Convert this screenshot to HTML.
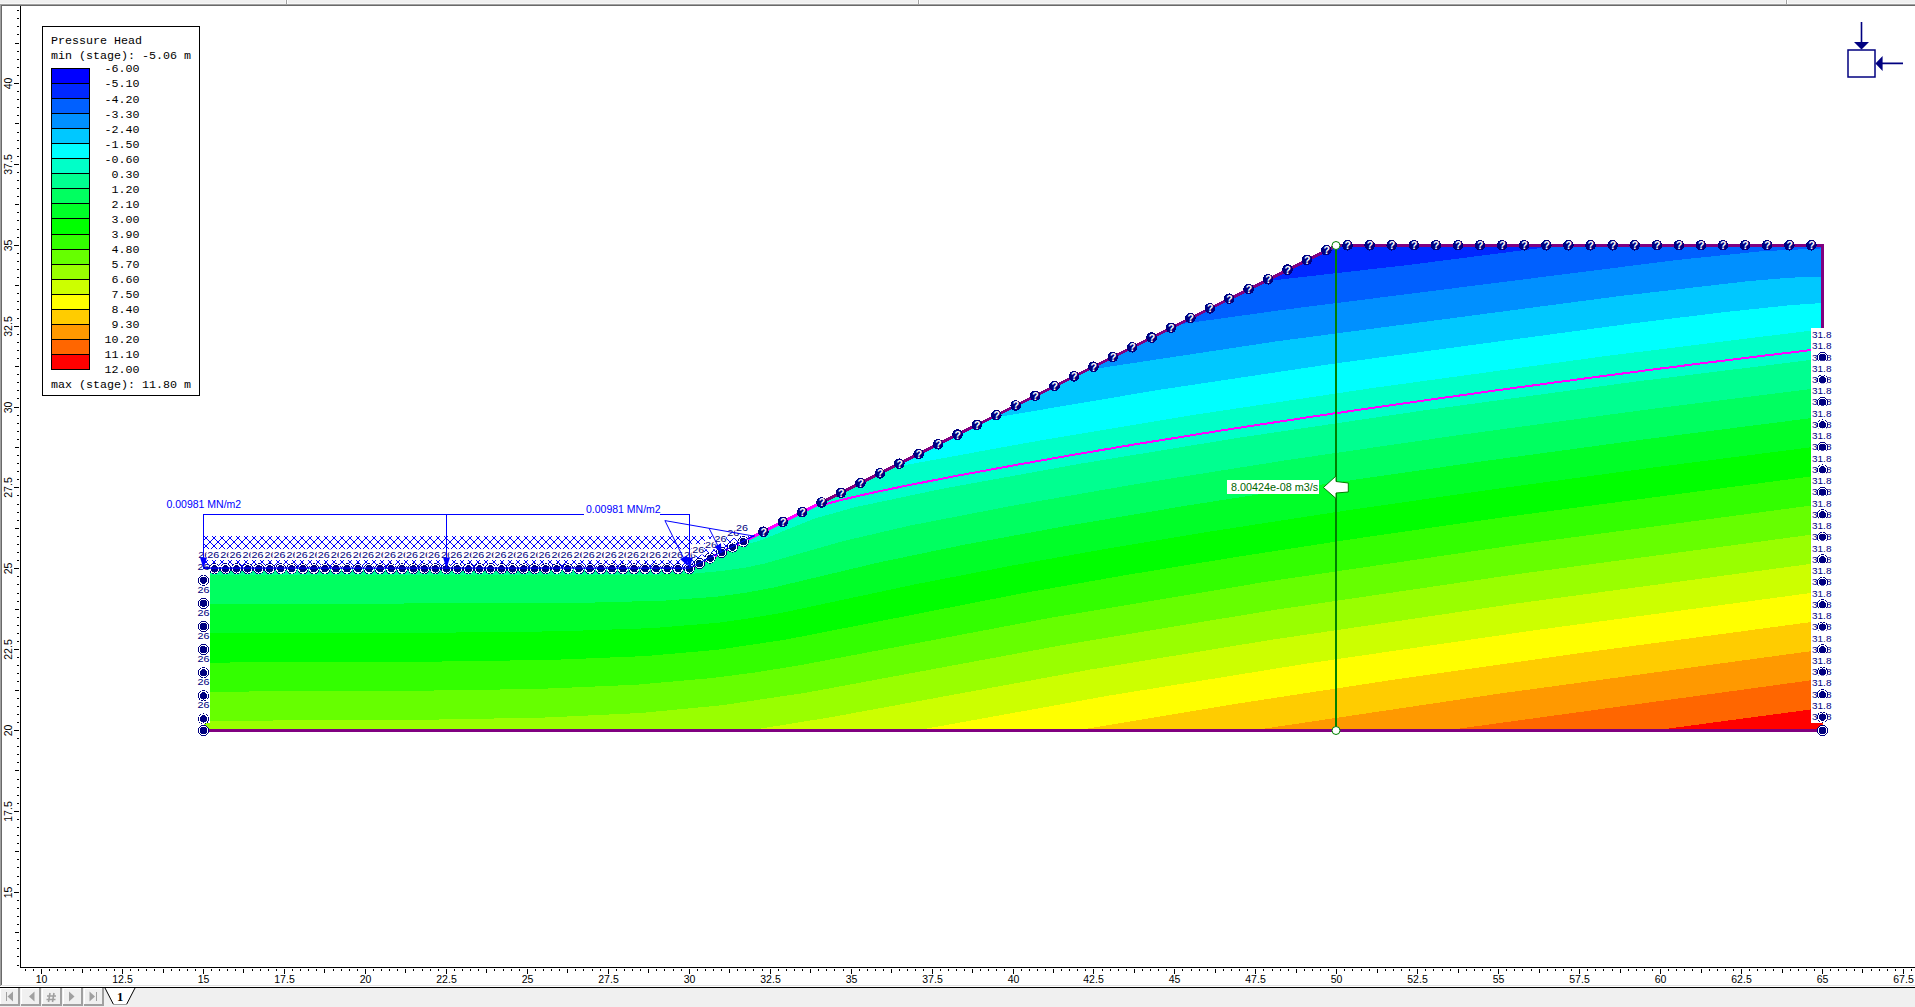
<!DOCTYPE html>
<html><head><meta charset="utf-8"><style>
html,body{margin:0;padding:0;background:#fff;width:1915px;height:1007px;overflow:hidden}
svg text{font-kerning:none}
</style></head><body>
<svg width="1915" height="1007" viewBox="0 0 1915 1007" style="position:absolute;left:0;top:0">
<rect x="0" y="0" width="1915" height="3" fill="#f0f0f0"/>
<rect x="0" y="3" width="1915" height="1" fill="#f7f7f7"/>
<rect x="0" y="4" width="1915" height="1" fill="#a0a0a0"/>
<rect x="0" y="5" width="1915" height="1" fill="#696969"/>
<rect x="285" y="0" width="1" height="4" fill="#f7f7f7"/>
<rect x="286" y="0" width="1" height="4" fill="#a0a0a0"/>
<rect x="287" y="0" width="1" height="4" fill="#ffffff"/>
<rect x="917" y="0" width="1" height="4" fill="#f7f7f7"/>
<rect x="918" y="0" width="1" height="4" fill="#a0a0a0"/>
<rect x="919" y="0" width="1" height="4" fill="#ffffff"/>
<rect x="1785" y="0" width="1" height="4" fill="#f7f7f7"/>
<rect x="1786" y="0" width="1" height="4" fill="#a0a0a0"/>
<rect x="1787" y="0" width="1" height="4" fill="#ffffff"/>
<rect x="0" y="4" width="1" height="982" fill="#a0a0a0"/>
<rect x="1" y="5" width="1" height="980" fill="#696969"/>
<rect x="1" y="985" width="1914" height="1" fill="#e3e3e3"/>
<rect x="0" y="987" width="1915" height="1" fill="#000000"/>
<rect x="0" y="988" width="1915" height="19" fill="#f0f0f0"/>
<rect x="0" y="988" width="20" height="18" fill="#ffffff"/>
<rect x="1" y="989" width="17" height="15" fill="#f0f0f0"/>
<rect x="18" y="988" width="2" height="18" fill="#a0a0a0"/>
<rect x="0" y="1004" width="20" height="2" fill="#a0a0a0"/>
<rect x="21" y="988" width="20" height="18" fill="#ffffff"/>
<rect x="22" y="989" width="17" height="15" fill="#f0f0f0"/>
<rect x="39" y="988" width="2" height="18" fill="#a0a0a0"/>
<rect x="21" y="1004" width="20" height="2" fill="#a0a0a0"/>
<rect x="42" y="988" width="20" height="18" fill="#ffffff"/>
<rect x="43" y="989" width="17" height="15" fill="#f0f0f0"/>
<rect x="60" y="988" width="2" height="18" fill="#a0a0a0"/>
<rect x="42" y="1004" width="20" height="2" fill="#a0a0a0"/>
<rect x="63" y="988" width="20" height="18" fill="#ffffff"/>
<rect x="64" y="989" width="17" height="15" fill="#f0f0f0"/>
<rect x="81" y="988" width="2" height="18" fill="#a0a0a0"/>
<rect x="63" y="1004" width="20" height="2" fill="#a0a0a0"/>
<rect x="84" y="988" width="20" height="18" fill="#ffffff"/>
<rect x="85" y="989" width="17" height="15" fill="#f0f0f0"/>
<rect x="102" y="988" width="2" height="18" fill="#a0a0a0"/>
<rect x="84" y="1004" width="20" height="2" fill="#a0a0a0"/>
<rect x="6" y="992" width="1" height="9" fill="#a0a0a0"/><path d="M13,991.5 L7.5,996.5 L13,1001.5Z" fill="#a0a0a0"/>
<path d="M34.5,991.5 L29,996.5 L34.5,1001.5Z" fill="#a0a0a0"/>
<path d="M50,993 L48.5,1002 M54,993 L52.5,1002 M47,996 L56,996 M46.5,999.5 L55.5,999.5" stroke="#a0a0a0" stroke-width="1.6" fill="none"/>
<path d="M69,991.5 L74.5,996.5 L69,1001.5Z" fill="#a0a0a0"/>
<path d="M89.5,991.5 L95,996.5 L89.5,1001.5Z" fill="#a0a0a0"/><rect x="96" y="992" width="1" height="9" fill="#a0a0a0"/>
<path d="M105,988 L113.5,1004.5 L126.5,1004.5 L135,988Z" fill="#ffffff"/>
<path d="M105,988 L113.5,1004.5 M135,988 L126.5,1004.5" stroke="#000" stroke-width="1" fill="none"/>
<rect x="113" y="1004" width="14" height="1" fill="#a0a0a0"/>
<text x="120" y="1000.5" font-family="Liberation Serif" font-size="12.5" font-weight="bold" fill="#000" text-anchor="middle">1</text>
<rect x="20" y="6" width="1" height="962" fill="#000"/>
<rect x="20" y="967" width="1895" height="1" fill="#000"/>
<rect x="25" y="969" width="1" height="2" fill="#000"/>
<rect x="33" y="969" width="1" height="2" fill="#000"/>
<text x="41.5" y="982.5" font-family="Liberation Sans" font-size="10.5" fill="#000" text-anchor="middle">10</text>
<rect x="41" y="969" width="1" height="5" fill="#000"/>
<rect x="49" y="969" width="1" height="2" fill="#000"/>
<rect x="57" y="969" width="1" height="2" fill="#000"/>
<rect x="65" y="969" width="1" height="2" fill="#000"/>
<rect x="73" y="969" width="1" height="2" fill="#000"/>
<rect x="82" y="969" width="1" height="4" fill="#000"/>
<rect x="90" y="969" width="1" height="2" fill="#000"/>
<rect x="98" y="969" width="1" height="2" fill="#000"/>
<rect x="106" y="969" width="1" height="2" fill="#000"/>
<rect x="114" y="969" width="1" height="2" fill="#000"/>
<text x="122.5" y="982.5" font-family="Liberation Sans" font-size="10.5" fill="#000" text-anchor="middle">12.5</text>
<rect x="122" y="969" width="1" height="5" fill="#000"/>
<rect x="130" y="969" width="1" height="2" fill="#000"/>
<rect x="138" y="969" width="1" height="2" fill="#000"/>
<rect x="146" y="969" width="1" height="2" fill="#000"/>
<rect x="154" y="969" width="1" height="2" fill="#000"/>
<rect x="163" y="969" width="1" height="4" fill="#000"/>
<rect x="171" y="969" width="1" height="2" fill="#000"/>
<rect x="179" y="969" width="1" height="2" fill="#000"/>
<rect x="187" y="969" width="1" height="2" fill="#000"/>
<rect x="195" y="969" width="1" height="2" fill="#000"/>
<text x="203.5" y="982.5" font-family="Liberation Sans" font-size="10.5" fill="#000" text-anchor="middle">15</text>
<rect x="203" y="969" width="1" height="5" fill="#000"/>
<rect x="211" y="969" width="1" height="2" fill="#000"/>
<rect x="219" y="969" width="1" height="2" fill="#000"/>
<rect x="227" y="969" width="1" height="2" fill="#000"/>
<rect x="235" y="969" width="1" height="2" fill="#000"/>
<rect x="243" y="969" width="1" height="4" fill="#000"/>
<rect x="252" y="969" width="1" height="2" fill="#000"/>
<rect x="260" y="969" width="1" height="2" fill="#000"/>
<rect x="268" y="969" width="1" height="2" fill="#000"/>
<rect x="276" y="969" width="1" height="2" fill="#000"/>
<text x="284.5" y="982.5" font-family="Liberation Sans" font-size="10.5" fill="#000" text-anchor="middle">17.5</text>
<rect x="284" y="969" width="1" height="5" fill="#000"/>
<rect x="292" y="969" width="1" height="2" fill="#000"/>
<rect x="300" y="969" width="1" height="2" fill="#000"/>
<rect x="308" y="969" width="1" height="2" fill="#000"/>
<rect x="316" y="969" width="1" height="2" fill="#000"/>
<rect x="324" y="969" width="1" height="4" fill="#000"/>
<rect x="333" y="969" width="1" height="2" fill="#000"/>
<rect x="341" y="969" width="1" height="2" fill="#000"/>
<rect x="349" y="969" width="1" height="2" fill="#000"/>
<rect x="357" y="969" width="1" height="2" fill="#000"/>
<text x="365.5" y="982.5" font-family="Liberation Sans" font-size="10.5" fill="#000" text-anchor="middle">20</text>
<rect x="365" y="969" width="1" height="5" fill="#000"/>
<rect x="373" y="969" width="1" height="2" fill="#000"/>
<rect x="381" y="969" width="1" height="2" fill="#000"/>
<rect x="389" y="969" width="1" height="2" fill="#000"/>
<rect x="397" y="969" width="1" height="2" fill="#000"/>
<rect x="405" y="969" width="1" height="4" fill="#000"/>
<rect x="413" y="969" width="1" height="2" fill="#000"/>
<rect x="422" y="969" width="1" height="2" fill="#000"/>
<rect x="430" y="969" width="1" height="2" fill="#000"/>
<rect x="438" y="969" width="1" height="2" fill="#000"/>
<text x="446.5" y="982.5" font-family="Liberation Sans" font-size="10.5" fill="#000" text-anchor="middle">22.5</text>
<rect x="446" y="969" width="1" height="5" fill="#000"/>
<rect x="454" y="969" width="1" height="2" fill="#000"/>
<rect x="462" y="969" width="1" height="2" fill="#000"/>
<rect x="470" y="969" width="1" height="2" fill="#000"/>
<rect x="478" y="969" width="1" height="2" fill="#000"/>
<rect x="486" y="969" width="1" height="4" fill="#000"/>
<rect x="494" y="969" width="1" height="2" fill="#000"/>
<rect x="503" y="969" width="1" height="2" fill="#000"/>
<rect x="511" y="969" width="1" height="2" fill="#000"/>
<rect x="519" y="969" width="1" height="2" fill="#000"/>
<text x="527.5" y="982.5" font-family="Liberation Sans" font-size="10.5" fill="#000" text-anchor="middle">25</text>
<rect x="527" y="969" width="1" height="5" fill="#000"/>
<rect x="535" y="969" width="1" height="2" fill="#000"/>
<rect x="543" y="969" width="1" height="2" fill="#000"/>
<rect x="551" y="969" width="1" height="2" fill="#000"/>
<rect x="559" y="969" width="1" height="2" fill="#000"/>
<rect x="567" y="969" width="1" height="4" fill="#000"/>
<rect x="575" y="969" width="1" height="2" fill="#000"/>
<rect x="583" y="969" width="1" height="2" fill="#000"/>
<rect x="592" y="969" width="1" height="2" fill="#000"/>
<rect x="600" y="969" width="1" height="2" fill="#000"/>
<text x="608.5" y="982.5" font-family="Liberation Sans" font-size="10.5" fill="#000" text-anchor="middle">27.5</text>
<rect x="608" y="969" width="1" height="5" fill="#000"/>
<rect x="616" y="969" width="1" height="2" fill="#000"/>
<rect x="624" y="969" width="1" height="2" fill="#000"/>
<rect x="632" y="969" width="1" height="2" fill="#000"/>
<rect x="640" y="969" width="1" height="2" fill="#000"/>
<rect x="648" y="969" width="1" height="4" fill="#000"/>
<rect x="656" y="969" width="1" height="2" fill="#000"/>
<rect x="664" y="969" width="1" height="2" fill="#000"/>
<rect x="673" y="969" width="1" height="2" fill="#000"/>
<rect x="681" y="969" width="1" height="2" fill="#000"/>
<text x="689.5" y="982.5" font-family="Liberation Sans" font-size="10.5" fill="#000" text-anchor="middle">30</text>
<rect x="689" y="969" width="1" height="5" fill="#000"/>
<rect x="697" y="969" width="1" height="2" fill="#000"/>
<rect x="705" y="969" width="1" height="2" fill="#000"/>
<rect x="713" y="969" width="1" height="2" fill="#000"/>
<rect x="721" y="969" width="1" height="2" fill="#000"/>
<rect x="729" y="969" width="1" height="4" fill="#000"/>
<rect x="737" y="969" width="1" height="2" fill="#000"/>
<rect x="745" y="969" width="1" height="2" fill="#000"/>
<rect x="753" y="969" width="1" height="2" fill="#000"/>
<rect x="762" y="969" width="1" height="2" fill="#000"/>
<text x="770.5" y="982.5" font-family="Liberation Sans" font-size="10.5" fill="#000" text-anchor="middle">32.5</text>
<rect x="770" y="969" width="1" height="5" fill="#000"/>
<rect x="778" y="969" width="1" height="2" fill="#000"/>
<rect x="786" y="969" width="1" height="2" fill="#000"/>
<rect x="794" y="969" width="1" height="2" fill="#000"/>
<rect x="802" y="969" width="1" height="2" fill="#000"/>
<rect x="810" y="969" width="1" height="4" fill="#000"/>
<rect x="818" y="969" width="1" height="2" fill="#000"/>
<rect x="826" y="969" width="1" height="2" fill="#000"/>
<rect x="834" y="969" width="1" height="2" fill="#000"/>
<rect x="843" y="969" width="1" height="2" fill="#000"/>
<text x="851.5" y="982.5" font-family="Liberation Sans" font-size="10.5" fill="#000" text-anchor="middle">35</text>
<rect x="851" y="969" width="1" height="5" fill="#000"/>
<rect x="859" y="969" width="1" height="2" fill="#000"/>
<rect x="867" y="969" width="1" height="2" fill="#000"/>
<rect x="875" y="969" width="1" height="2" fill="#000"/>
<rect x="883" y="969" width="1" height="2" fill="#000"/>
<rect x="891" y="969" width="1" height="4" fill="#000"/>
<rect x="899" y="969" width="1" height="2" fill="#000"/>
<rect x="907" y="969" width="1" height="2" fill="#000"/>
<rect x="915" y="969" width="1" height="2" fill="#000"/>
<rect x="923" y="969" width="1" height="2" fill="#000"/>
<text x="932.5" y="982.5" font-family="Liberation Sans" font-size="10.5" fill="#000" text-anchor="middle">37.5</text>
<rect x="932" y="969" width="1" height="5" fill="#000"/>
<rect x="940" y="969" width="1" height="2" fill="#000"/>
<rect x="948" y="969" width="1" height="2" fill="#000"/>
<rect x="956" y="969" width="1" height="2" fill="#000"/>
<rect x="964" y="969" width="1" height="2" fill="#000"/>
<rect x="972" y="969" width="1" height="4" fill="#000"/>
<rect x="980" y="969" width="1" height="2" fill="#000"/>
<rect x="988" y="969" width="1" height="2" fill="#000"/>
<rect x="996" y="969" width="1" height="2" fill="#000"/>
<rect x="1004" y="969" width="1" height="2" fill="#000"/>
<text x="1013.5" y="982.5" font-family="Liberation Sans" font-size="10.5" fill="#000" text-anchor="middle">40</text>
<rect x="1013" y="969" width="1" height="5" fill="#000"/>
<rect x="1021" y="969" width="1" height="2" fill="#000"/>
<rect x="1029" y="969" width="1" height="2" fill="#000"/>
<rect x="1037" y="969" width="1" height="2" fill="#000"/>
<rect x="1045" y="969" width="1" height="2" fill="#000"/>
<rect x="1053" y="969" width="1" height="4" fill="#000"/>
<rect x="1061" y="969" width="1" height="2" fill="#000"/>
<rect x="1069" y="969" width="1" height="2" fill="#000"/>
<rect x="1077" y="969" width="1" height="2" fill="#000"/>
<rect x="1085" y="969" width="1" height="2" fill="#000"/>
<text x="1093.5" y="982.5" font-family="Liberation Sans" font-size="10.5" fill="#000" text-anchor="middle">42.5</text>
<rect x="1093" y="969" width="1" height="5" fill="#000"/>
<rect x="1102" y="969" width="1" height="2" fill="#000"/>
<rect x="1110" y="969" width="1" height="2" fill="#000"/>
<rect x="1118" y="969" width="1" height="2" fill="#000"/>
<rect x="1126" y="969" width="1" height="2" fill="#000"/>
<rect x="1134" y="969" width="1" height="4" fill="#000"/>
<rect x="1142" y="969" width="1" height="2" fill="#000"/>
<rect x="1150" y="969" width="1" height="2" fill="#000"/>
<rect x="1158" y="969" width="1" height="2" fill="#000"/>
<rect x="1166" y="969" width="1" height="2" fill="#000"/>
<text x="1174.5" y="982.5" font-family="Liberation Sans" font-size="10.5" fill="#000" text-anchor="middle">45</text>
<rect x="1174" y="969" width="1" height="5" fill="#000"/>
<rect x="1182" y="969" width="1" height="2" fill="#000"/>
<rect x="1191" y="969" width="1" height="2" fill="#000"/>
<rect x="1199" y="969" width="1" height="2" fill="#000"/>
<rect x="1207" y="969" width="1" height="2" fill="#000"/>
<rect x="1215" y="969" width="1" height="4" fill="#000"/>
<rect x="1223" y="969" width="1" height="2" fill="#000"/>
<rect x="1231" y="969" width="1" height="2" fill="#000"/>
<rect x="1239" y="969" width="1" height="2" fill="#000"/>
<rect x="1247" y="969" width="1" height="2" fill="#000"/>
<text x="1255.5" y="982.5" font-family="Liberation Sans" font-size="10.5" fill="#000" text-anchor="middle">47.5</text>
<rect x="1255" y="969" width="1" height="5" fill="#000"/>
<rect x="1263" y="969" width="1" height="2" fill="#000"/>
<rect x="1272" y="969" width="1" height="2" fill="#000"/>
<rect x="1280" y="969" width="1" height="2" fill="#000"/>
<rect x="1288" y="969" width="1" height="2" fill="#000"/>
<rect x="1296" y="969" width="1" height="4" fill="#000"/>
<rect x="1304" y="969" width="1" height="2" fill="#000"/>
<rect x="1312" y="969" width="1" height="2" fill="#000"/>
<rect x="1320" y="969" width="1" height="2" fill="#000"/>
<rect x="1328" y="969" width="1" height="2" fill="#000"/>
<text x="1336.5" y="982.5" font-family="Liberation Sans" font-size="10.5" fill="#000" text-anchor="middle">50</text>
<rect x="1336" y="969" width="1" height="5" fill="#000"/>
<rect x="1344" y="969" width="1" height="2" fill="#000"/>
<rect x="1352" y="969" width="1" height="2" fill="#000"/>
<rect x="1361" y="969" width="1" height="2" fill="#000"/>
<rect x="1369" y="969" width="1" height="2" fill="#000"/>
<rect x="1377" y="969" width="1" height="4" fill="#000"/>
<rect x="1385" y="969" width="1" height="2" fill="#000"/>
<rect x="1393" y="969" width="1" height="2" fill="#000"/>
<rect x="1401" y="969" width="1" height="2" fill="#000"/>
<rect x="1409" y="969" width="1" height="2" fill="#000"/>
<text x="1417.5" y="982.5" font-family="Liberation Sans" font-size="10.5" fill="#000" text-anchor="middle">52.5</text>
<rect x="1417" y="969" width="1" height="5" fill="#000"/>
<rect x="1425" y="969" width="1" height="2" fill="#000"/>
<rect x="1433" y="969" width="1" height="2" fill="#000"/>
<rect x="1442" y="969" width="1" height="2" fill="#000"/>
<rect x="1450" y="969" width="1" height="2" fill="#000"/>
<rect x="1458" y="969" width="1" height="4" fill="#000"/>
<rect x="1466" y="969" width="1" height="2" fill="#000"/>
<rect x="1474" y="969" width="1" height="2" fill="#000"/>
<rect x="1482" y="969" width="1" height="2" fill="#000"/>
<rect x="1490" y="969" width="1" height="2" fill="#000"/>
<text x="1498.5" y="982.5" font-family="Liberation Sans" font-size="10.5" fill="#000" text-anchor="middle">55</text>
<rect x="1498" y="969" width="1" height="5" fill="#000"/>
<rect x="1506" y="969" width="1" height="2" fill="#000"/>
<rect x="1514" y="969" width="1" height="2" fill="#000"/>
<rect x="1522" y="969" width="1" height="2" fill="#000"/>
<rect x="1531" y="969" width="1" height="2" fill="#000"/>
<rect x="1539" y="969" width="1" height="4" fill="#000"/>
<rect x="1547" y="969" width="1" height="2" fill="#000"/>
<rect x="1555" y="969" width="1" height="2" fill="#000"/>
<rect x="1563" y="969" width="1" height="2" fill="#000"/>
<rect x="1571" y="969" width="1" height="2" fill="#000"/>
<text x="1579.5" y="982.5" font-family="Liberation Sans" font-size="10.5" fill="#000" text-anchor="middle">57.5</text>
<rect x="1579" y="969" width="1" height="5" fill="#000"/>
<rect x="1587" y="969" width="1" height="2" fill="#000"/>
<rect x="1595" y="969" width="1" height="2" fill="#000"/>
<rect x="1603" y="969" width="1" height="2" fill="#000"/>
<rect x="1612" y="969" width="1" height="2" fill="#000"/>
<rect x="1620" y="969" width="1" height="4" fill="#000"/>
<rect x="1628" y="969" width="1" height="2" fill="#000"/>
<rect x="1636" y="969" width="1" height="2" fill="#000"/>
<rect x="1644" y="969" width="1" height="2" fill="#000"/>
<rect x="1652" y="969" width="1" height="2" fill="#000"/>
<text x="1660.5" y="982.5" font-family="Liberation Sans" font-size="10.5" fill="#000" text-anchor="middle">60</text>
<rect x="1660" y="969" width="1" height="5" fill="#000"/>
<rect x="1668" y="969" width="1" height="2" fill="#000"/>
<rect x="1676" y="969" width="1" height="2" fill="#000"/>
<rect x="1684" y="969" width="1" height="2" fill="#000"/>
<rect x="1692" y="969" width="1" height="2" fill="#000"/>
<rect x="1701" y="969" width="1" height="4" fill="#000"/>
<rect x="1709" y="969" width="1" height="2" fill="#000"/>
<rect x="1717" y="969" width="1" height="2" fill="#000"/>
<rect x="1725" y="969" width="1" height="2" fill="#000"/>
<rect x="1733" y="969" width="1" height="2" fill="#000"/>
<text x="1741.5" y="982.5" font-family="Liberation Sans" font-size="10.5" fill="#000" text-anchor="middle">62.5</text>
<rect x="1741" y="969" width="1" height="5" fill="#000"/>
<rect x="1749" y="969" width="1" height="2" fill="#000"/>
<rect x="1757" y="969" width="1" height="2" fill="#000"/>
<rect x="1765" y="969" width="1" height="2" fill="#000"/>
<rect x="1773" y="969" width="1" height="2" fill="#000"/>
<rect x="1782" y="969" width="1" height="4" fill="#000"/>
<rect x="1790" y="969" width="1" height="2" fill="#000"/>
<rect x="1798" y="969" width="1" height="2" fill="#000"/>
<rect x="1806" y="969" width="1" height="2" fill="#000"/>
<rect x="1814" y="969" width="1" height="2" fill="#000"/>
<text x="1822.5" y="982.5" font-family="Liberation Sans" font-size="10.5" fill="#000" text-anchor="middle">65</text>
<rect x="1822" y="969" width="1" height="5" fill="#000"/>
<rect x="1830" y="969" width="1" height="2" fill="#000"/>
<rect x="1838" y="969" width="1" height="2" fill="#000"/>
<rect x="1846" y="969" width="1" height="2" fill="#000"/>
<rect x="1854" y="969" width="1" height="2" fill="#000"/>
<rect x="1862" y="969" width="1" height="4" fill="#000"/>
<rect x="1871" y="969" width="1" height="2" fill="#000"/>
<rect x="1879" y="969" width="1" height="2" fill="#000"/>
<rect x="1887" y="969" width="1" height="2" fill="#000"/>
<rect x="1895" y="969" width="1" height="2" fill="#000"/>
<text x="1903.5" y="982.5" font-family="Liberation Sans" font-size="10.5" fill="#000" text-anchor="middle">67.5</text>
<rect x="1903" y="969" width="1" height="5" fill="#000"/>
<rect x="1911" y="969" width="1" height="2" fill="#000"/>
<rect x="17" y="965" width="2" height="1" fill="#000"/>
<rect x="17" y="956" width="2" height="1" fill="#000"/>
<rect x="17" y="948" width="2" height="1" fill="#000"/>
<rect x="17" y="940" width="2" height="1" fill="#000"/>
<rect x="15" y="932" width="4" height="1" fill="#000"/>
<rect x="17" y="924" width="2" height="1" fill="#000"/>
<rect x="17" y="916" width="2" height="1" fill="#000"/>
<rect x="17" y="908" width="2" height="1" fill="#000"/>
<rect x="17" y="900" width="2" height="1" fill="#000"/>
<text x="0" y="0" transform="translate(11.7,892.5) rotate(-90)" font-family="Liberation Sans" font-size="10.5" fill="#000" text-anchor="middle">15</text>
<rect x="14" y="892" width="5" height="1" fill="#000"/>
<rect x="17" y="884" width="2" height="1" fill="#000"/>
<rect x="17" y="876" width="2" height="1" fill="#000"/>
<rect x="17" y="867" width="2" height="1" fill="#000"/>
<rect x="17" y="859" width="2" height="1" fill="#000"/>
<rect x="15" y="851" width="4" height="1" fill="#000"/>
<rect x="17" y="843" width="2" height="1" fill="#000"/>
<rect x="17" y="835" width="2" height="1" fill="#000"/>
<rect x="17" y="827" width="2" height="1" fill="#000"/>
<rect x="17" y="819" width="2" height="1" fill="#000"/>
<text x="0" y="0" transform="translate(11.7,811.5) rotate(-90)" font-family="Liberation Sans" font-size="10.5" fill="#000" text-anchor="middle">17.5</text>
<rect x="14" y="811" width="5" height="1" fill="#000"/>
<rect x="17" y="803" width="2" height="1" fill="#000"/>
<rect x="17" y="795" width="2" height="1" fill="#000"/>
<rect x="17" y="787" width="2" height="1" fill="#000"/>
<rect x="17" y="779" width="2" height="1" fill="#000"/>
<rect x="15" y="770" width="4" height="1" fill="#000"/>
<rect x="17" y="762" width="2" height="1" fill="#000"/>
<rect x="17" y="754" width="2" height="1" fill="#000"/>
<rect x="17" y="746" width="2" height="1" fill="#000"/>
<rect x="17" y="738" width="2" height="1" fill="#000"/>
<text x="0" y="0" transform="translate(11.7,730.5) rotate(-90)" font-family="Liberation Sans" font-size="10.5" fill="#000" text-anchor="middle">20</text>
<rect x="14" y="730" width="5" height="1" fill="#000"/>
<rect x="17" y="722" width="2" height="1" fill="#000"/>
<rect x="17" y="714" width="2" height="1" fill="#000"/>
<rect x="17" y="706" width="2" height="1" fill="#000"/>
<rect x="17" y="698" width="2" height="1" fill="#000"/>
<rect x="15" y="690" width="4" height="1" fill="#000"/>
<rect x="17" y="681" width="2" height="1" fill="#000"/>
<rect x="17" y="673" width="2" height="1" fill="#000"/>
<rect x="17" y="665" width="2" height="1" fill="#000"/>
<rect x="17" y="657" width="2" height="1" fill="#000"/>
<text x="0" y="0" transform="translate(11.7,649.5) rotate(-90)" font-family="Liberation Sans" font-size="10.5" fill="#000" text-anchor="middle">22.5</text>
<rect x="14" y="649" width="5" height="1" fill="#000"/>
<rect x="17" y="641" width="2" height="1" fill="#000"/>
<rect x="17" y="633" width="2" height="1" fill="#000"/>
<rect x="17" y="625" width="2" height="1" fill="#000"/>
<rect x="17" y="617" width="2" height="1" fill="#000"/>
<rect x="15" y="609" width="4" height="1" fill="#000"/>
<rect x="17" y="601" width="2" height="1" fill="#000"/>
<rect x="17" y="593" width="2" height="1" fill="#000"/>
<rect x="17" y="584" width="2" height="1" fill="#000"/>
<rect x="17" y="576" width="2" height="1" fill="#000"/>
<text x="0" y="0" transform="translate(11.7,568.5) rotate(-90)" font-family="Liberation Sans" font-size="10.5" fill="#000" text-anchor="middle">25</text>
<rect x="14" y="568" width="5" height="1" fill="#000"/>
<rect x="17" y="560" width="2" height="1" fill="#000"/>
<rect x="17" y="552" width="2" height="1" fill="#000"/>
<rect x="17" y="544" width="2" height="1" fill="#000"/>
<rect x="17" y="536" width="2" height="1" fill="#000"/>
<rect x="15" y="528" width="4" height="1" fill="#000"/>
<rect x="17" y="520" width="2" height="1" fill="#000"/>
<rect x="17" y="512" width="2" height="1" fill="#000"/>
<rect x="17" y="504" width="2" height="1" fill="#000"/>
<rect x="17" y="495" width="2" height="1" fill="#000"/>
<text x="0" y="0" transform="translate(11.7,487.5) rotate(-90)" font-family="Liberation Sans" font-size="10.5" fill="#000" text-anchor="middle">27.5</text>
<rect x="14" y="487" width="5" height="1" fill="#000"/>
<rect x="17" y="479" width="2" height="1" fill="#000"/>
<rect x="17" y="471" width="2" height="1" fill="#000"/>
<rect x="17" y="463" width="2" height="1" fill="#000"/>
<rect x="17" y="455" width="2" height="1" fill="#000"/>
<rect x="15" y="447" width="4" height="1" fill="#000"/>
<rect x="17" y="439" width="2" height="1" fill="#000"/>
<rect x="17" y="431" width="2" height="1" fill="#000"/>
<rect x="17" y="423" width="2" height="1" fill="#000"/>
<rect x="17" y="415" width="2" height="1" fill="#000"/>
<text x="0" y="0" transform="translate(11.7,407.5) rotate(-90)" font-family="Liberation Sans" font-size="10.5" fill="#000" text-anchor="middle">30</text>
<rect x="14" y="407" width="5" height="1" fill="#000"/>
<rect x="17" y="398" width="2" height="1" fill="#000"/>
<rect x="17" y="390" width="2" height="1" fill="#000"/>
<rect x="17" y="382" width="2" height="1" fill="#000"/>
<rect x="17" y="374" width="2" height="1" fill="#000"/>
<rect x="15" y="366" width="4" height="1" fill="#000"/>
<rect x="17" y="358" width="2" height="1" fill="#000"/>
<rect x="17" y="350" width="2" height="1" fill="#000"/>
<rect x="17" y="342" width="2" height="1" fill="#000"/>
<rect x="17" y="334" width="2" height="1" fill="#000"/>
<text x="0" y="0" transform="translate(11.7,326.5) rotate(-90)" font-family="Liberation Sans" font-size="10.5" fill="#000" text-anchor="middle">32.5</text>
<rect x="14" y="326" width="5" height="1" fill="#000"/>
<rect x="17" y="318" width="2" height="1" fill="#000"/>
<rect x="17" y="309" width="2" height="1" fill="#000"/>
<rect x="17" y="301" width="2" height="1" fill="#000"/>
<rect x="17" y="293" width="2" height="1" fill="#000"/>
<rect x="15" y="285" width="4" height="1" fill="#000"/>
<rect x="17" y="277" width="2" height="1" fill="#000"/>
<rect x="17" y="269" width="2" height="1" fill="#000"/>
<rect x="17" y="261" width="2" height="1" fill="#000"/>
<rect x="17" y="253" width="2" height="1" fill="#000"/>
<text x="0" y="0" transform="translate(11.7,245.5) rotate(-90)" font-family="Liberation Sans" font-size="10.5" fill="#000" text-anchor="middle">35</text>
<rect x="14" y="245" width="5" height="1" fill="#000"/>
<rect x="17" y="237" width="2" height="1" fill="#000"/>
<rect x="17" y="229" width="2" height="1" fill="#000"/>
<rect x="17" y="220" width="2" height="1" fill="#000"/>
<rect x="17" y="212" width="2" height="1" fill="#000"/>
<rect x="15" y="204" width="4" height="1" fill="#000"/>
<rect x="17" y="196" width="2" height="1" fill="#000"/>
<rect x="17" y="188" width="2" height="1" fill="#000"/>
<rect x="17" y="180" width="2" height="1" fill="#000"/>
<rect x="17" y="172" width="2" height="1" fill="#000"/>
<text x="0" y="0" transform="translate(11.7,164.5) rotate(-90)" font-family="Liberation Sans" font-size="10.5" fill="#000" text-anchor="middle">37.5</text>
<rect x="14" y="164" width="5" height="1" fill="#000"/>
<rect x="17" y="156" width="2" height="1" fill="#000"/>
<rect x="17" y="148" width="2" height="1" fill="#000"/>
<rect x="17" y="140" width="2" height="1" fill="#000"/>
<rect x="17" y="132" width="2" height="1" fill="#000"/>
<rect x="15" y="123" width="4" height="1" fill="#000"/>
<rect x="17" y="115" width="2" height="1" fill="#000"/>
<rect x="17" y="107" width="2" height="1" fill="#000"/>
<rect x="17" y="99" width="2" height="1" fill="#000"/>
<rect x="17" y="91" width="2" height="1" fill="#000"/>
<text x="0" y="0" transform="translate(11.7,83.5) rotate(-90)" font-family="Liberation Sans" font-size="10.5" fill="#000" text-anchor="middle">40</text>
<rect x="14" y="83" width="5" height="1" fill="#000"/>
<rect x="17" y="75" width="2" height="1" fill="#000"/>
<rect x="17" y="67" width="2" height="1" fill="#000"/>
<rect x="17" y="59" width="2" height="1" fill="#000"/>
<rect x="17" y="51" width="2" height="1" fill="#000"/>
<rect x="15" y="43" width="4" height="1" fill="#000"/>
<rect x="17" y="34" width="2" height="1" fill="#000"/>
<rect x="17" y="26" width="2" height="1" fill="#000"/>
<rect x="17" y="18" width="2" height="1" fill="#000"/>
<rect x="17" y="10" width="2" height="1" fill="#000"/>
<rect x="42.5" y="26.5" width="157" height="369" fill="#fff" stroke="#000" stroke-width="1"/>
<text x="51" y="44" font-family="Liberation Mono" font-size="11.67" fill="#000">Pressure Head</text>
<text x="51" y="59" font-family="Liberation Mono" font-size="11.67" fill="#000">min (stage): -5.06 m</text>
<rect x="51" y="68" width="39" height="16" fill="#000"/>
<rect x="52" y="69" width="37" height="14" fill="#0000ff"/>
<rect x="51" y="83" width="39" height="16" fill="#000"/>
<rect x="52" y="84" width="37" height="14" fill="#0028ff"/>
<rect x="51" y="98" width="39" height="16" fill="#000"/>
<rect x="52" y="99" width="37" height="14" fill="#0060ff"/>
<rect x="51" y="113" width="39" height="16" fill="#000"/>
<rect x="52" y="114" width="37" height="14" fill="#0090ff"/>
<rect x="51" y="128" width="39" height="16" fill="#000"/>
<rect x="52" y="129" width="37" height="14" fill="#00c8ff"/>
<rect x="51" y="143" width="39" height="16" fill="#000"/>
<rect x="52" y="144" width="37" height="14" fill="#00ffff"/>
<rect x="51" y="158" width="39" height="16" fill="#000"/>
<rect x="52" y="159" width="37" height="14" fill="#00ffc8"/>
<rect x="51" y="173" width="39" height="16" fill="#000"/>
<rect x="52" y="174" width="37" height="14" fill="#00ff90"/>
<rect x="51" y="188" width="39" height="16" fill="#000"/>
<rect x="52" y="189" width="37" height="14" fill="#00ff60"/>
<rect x="51" y="203" width="39" height="16" fill="#000"/>
<rect x="52" y="204" width="37" height="14" fill="#00ff28"/>
<rect x="51" y="218" width="39" height="17" fill="#000"/>
<rect x="52" y="219" width="37" height="15" fill="#00ff00"/>
<rect x="51" y="234" width="39" height="16" fill="#000"/>
<rect x="52" y="235" width="37" height="14" fill="#33ff00"/>
<rect x="51" y="249" width="39" height="16" fill="#000"/>
<rect x="52" y="250" width="37" height="14" fill="#66ff00"/>
<rect x="51" y="264" width="39" height="16" fill="#000"/>
<rect x="52" y="265" width="37" height="14" fill="#99ff00"/>
<rect x="51" y="279" width="39" height="16" fill="#000"/>
<rect x="52" y="280" width="37" height="14" fill="#ccff00"/>
<rect x="51" y="294" width="39" height="16" fill="#000"/>
<rect x="52" y="295" width="37" height="14" fill="#ffff00"/>
<rect x="51" y="309" width="39" height="16" fill="#000"/>
<rect x="52" y="310" width="37" height="14" fill="#ffcc00"/>
<rect x="51" y="324" width="39" height="16" fill="#000"/>
<rect x="52" y="325" width="37" height="14" fill="#ff9900"/>
<rect x="51" y="339" width="39" height="16" fill="#000"/>
<rect x="52" y="340" width="37" height="14" fill="#ff6600"/>
<rect x="51" y="354" width="39" height="16" fill="#000"/>
<rect x="52" y="355" width="37" height="14" fill="#ff0000"/>
<text x="139.5" y="72.4" font-family="Liberation Mono" font-size="11.67" fill="#000" text-anchor="end">-6.00</text>
<text x="139.5" y="87.4" font-family="Liberation Mono" font-size="11.67" fill="#000" text-anchor="end">-5.10</text>
<text x="139.5" y="102.5" font-family="Liberation Mono" font-size="11.67" fill="#000" text-anchor="end">-4.20</text>
<text x="139.5" y="117.5" font-family="Liberation Mono" font-size="11.67" fill="#000" text-anchor="end">-3.30</text>
<text x="139.5" y="132.6" font-family="Liberation Mono" font-size="11.67" fill="#000" text-anchor="end">-2.40</text>
<text x="139.5" y="147.6" font-family="Liberation Mono" font-size="11.67" fill="#000" text-anchor="end">-1.50</text>
<text x="139.5" y="162.6" font-family="Liberation Mono" font-size="11.67" fill="#000" text-anchor="end">-0.60</text>
<text x="139.5" y="177.7" font-family="Liberation Mono" font-size="11.67" fill="#000" text-anchor="end">0.30</text>
<text x="139.5" y="192.7" font-family="Liberation Mono" font-size="11.67" fill="#000" text-anchor="end">1.20</text>
<text x="139.5" y="207.8" font-family="Liberation Mono" font-size="11.67" fill="#000" text-anchor="end">2.10</text>
<text x="139.5" y="222.8" font-family="Liberation Mono" font-size="11.67" fill="#000" text-anchor="end">3.00</text>
<text x="139.5" y="237.8" font-family="Liberation Mono" font-size="11.67" fill="#000" text-anchor="end">3.90</text>
<text x="139.5" y="252.9" font-family="Liberation Mono" font-size="11.67" fill="#000" text-anchor="end">4.80</text>
<text x="139.5" y="267.9" font-family="Liberation Mono" font-size="11.67" fill="#000" text-anchor="end">5.70</text>
<text x="139.5" y="283.0" font-family="Liberation Mono" font-size="11.67" fill="#000" text-anchor="end">6.60</text>
<text x="139.5" y="298.0" font-family="Liberation Mono" font-size="11.67" fill="#000" text-anchor="end">7.50</text>
<text x="139.5" y="313.0" font-family="Liberation Mono" font-size="11.67" fill="#000" text-anchor="end">8.40</text>
<text x="139.5" y="328.1" font-family="Liberation Mono" font-size="11.67" fill="#000" text-anchor="end">9.30</text>
<text x="139.5" y="343.1" font-family="Liberation Mono" font-size="11.67" fill="#000" text-anchor="end">10.20</text>
<text x="139.5" y="358.2" font-family="Liberation Mono" font-size="11.67" fill="#000" text-anchor="end">11.10</text>
<text x="139.5" y="373.2" font-family="Liberation Mono" font-size="11.67" fill="#000" text-anchor="end">12.00</text>
<text x="51" y="388" font-family="Liberation Mono" font-size="11.67" fill="#000">max (stage): 11.80 m</text>
<defs><clipPath id="mc"><path d="M203.5,730.5 203.5,568.8 689.2,568.8 1336.8,245.2 1822.5,245.2 1822.5,730.5Z"/></clipPath></defs>
<g clip-path="url(#mc)" shape-rendering="crispEdges">
<path d="M203.5,730.5 203.5,568.8 689.2,568.8 1336.8,245.2 1822.5,245.2 1822.5,730.5Z" fill="#0000ff"/>
<path d="M203.5,730.5 1822.5,730.5 1822.5,245.2 1786.1,245.2 1312.5,245.6 1231.6,257.2 1126.3,275.3 1029.2,293.9 883.5,323.9 843,333.7 810.6,343.1 806.6,345.9 802.5,347.2 762.1,367.4 758,368.2 754,371.4 749.9,369.5 745.9,371.4 741.8,369.9 737.8,371.4 733.7,370.2 729.7,371.4 725.6,370.3 721.6,371.4 717.5,370.4 713.5,371.4 709.4,370.5 705.4,371.4 701.3,370.6 697.3,371.4 693.2,370.6 689.2,371.4 203.5,371.4 203.5,730.5Z" fill="#0028ff"/>
<path d="M203.5,730.5 1822.5,730.5 1822.5,245.2 1814.4,245.2 1562.7,245.2 1409.7,264.8 1263.9,281.4 1183,294.4 1085.9,312 932.1,342.6 867.3,356.7 810.6,372.2 806.6,375 802.5,376.3 762.1,396.5 758,397.4 754,400.5 749.9,398.6 745.9,400.5 741.8,399 737.8,400.5 733.7,399.3 729.7,400.5 725.6,399.4 721.6,400.5 717.5,399.5 713.5,400.5 709.4,399.6 705.4,400.5 701.3,399.7 697.3,400.5 693.2,399.7 689.2,400.5 203.5,400.5 203.5,730.5Z" fill="#0060ff"/>
<path d="M203.5,730.5 1822.5,730.5 1822.5,248.4 1761.8,251.2 1676.8,260 1284.2,309.7 1174.9,324.9 1021.1,353.8 907.8,376.8 851.1,389.8 810.6,401.3 806.6,404.2 802.5,405.4 762.1,425.6 758,426.5 754,429.6 749.9,427.8 745.9,429.6 741.8,428.2 737.8,429.6 733.7,428.4 729.7,429.6 725.6,428.5 721.6,429.6 717.5,428.6 713.5,429.6 709.4,428.7 705.4,429.6 701.3,428.8 697.3,429.6 693.2,428.8 689.2,429.6 203.5,429.6 203.5,730.5Z" fill="#0090ff"/>
<path d="M203.5,730.5 1822.5,730.5 1822.5,276.5 1790.1,277.7 1749.6,281 1620.1,296 1276.1,341.4 1085.9,370.2 915.9,404.2 843,421 810.6,430.5 806.6,433.3 802.5,434.5 762.1,454.7 758,455.6 754,458.8 749.9,456.9 745.9,458.8 741.8,457.3 737.8,458.8 733.7,457.5 729.7,458.8 725.6,457.7 721.6,458.8 717.5,457.8 713.5,458.8 709.4,457.8 705.4,458.8 701.3,457.9 697.3,458.8 693.2,457.9 689.2,458.8 203.5,458.8 203.5,730.5Z" fill="#00c8ff"/>
<path d="M203.5,730.5 1822.5,730.5 1822.5,303 1790.1,305.2 1725.4,312 1632.3,323.4 1332.8,363.8 1158.7,389.9 988.7,418.6 883.5,440.3 826.8,454.7 810.6,459.6 806.6,462.4 802.5,463.6 762.1,483.8 758,484.7 754,487.9 749.9,486 745.9,487.9 741.8,486.4 737.8,487.9 733.7,486.6 729.7,487.9 725.6,486.8 721.6,487.9 717.5,486.9 713.5,487.9 709.4,487 705.4,487.9 701.3,487 697.3,487.9 693.2,487.1 689.2,487.9 203.5,487.9 203.5,730.5Z" fill="#00ffff"/>
<path d="M203.5,730.5 1822.5,730.5 1822.5,329.4 1794.2,332.7 1603.9,356.3 1369.2,388.5 1191.1,415.3 1029.2,442.4 891.6,467.6 843,479.2 810.6,488.7 806.6,491.5 802.5,492.7 762.1,512.9 758,513.8 754,517 749.9,515.1 745.9,517 741.8,515.5 737.8,517 733.7,515.7 729.7,517 725.6,515.9 721.6,517 717.5,516 713.5,517 709.4,516.1 705.4,517 701.3,516.1 697.3,517 693.2,516.2 689.2,517 203.5,517 203.5,730.5Z" fill="#00ffc8"/>
<path d="M203.5,730.5 1822.5,730.5 1822.5,358.5 1632.3,382 1421.8,410.7 1239.7,437.6 1077.8,464.1 944.2,488.4 855.1,507.2 814.7,518.5 758,541.4 737.8,545.6 733.7,544.8 729.7,546.1 725.6,545 721.6,546.1 717.5,545.1 713.5,546.1 709.4,545.2 705.4,546.1 701.3,545.2 697.3,546.1 693.2,545.3 689.2,546.1 203.5,546.1 203.5,730.5Z" fill="#00ff90"/>
<path d="M203.5,730.5 1822.5,730.5 1822.5,387.6 1644.4,409.9 1458.2,435.2 1288.2,459.9 1138.5,483.7 1013,505.6 911.8,525.2 843,541.1 766.1,563.2 745.9,567.5 721.6,571 689.2,574 656.8,574.6 203.5,575.2 203.5,730.5Z" fill="#00ff60"/>
<path d="M203.5,730.5 1822.5,730.5 1822.5,416.7 1648.5,438.8 1482.5,461.3 1324.7,484.1 1183,506.2 1065.6,526.1 964.4,544.7 879.4,562.3 774.2,587.4 745.9,592.7 717.5,596.6 664.9,600.6 584,602.8 203.5,604.3 203.5,730.5Z" fill="#00ff28"/>
<path d="M203.5,730.5 1822.5,730.5 1822.5,445.8 1652.5,467.6 1494.7,489.1 1348.9,510.1 1215.4,530.7 1110.1,548.1 1013,565.4 915.9,584.2 782.3,612.7 749.9,618.3 717.5,622.8 652.8,628.1 559.7,631.3 430.2,632.8 203.5,633.5 203.5,730.5Z" fill="#00ff00"/>
<path d="M203.5,730.5 1822.5,730.5 1822.5,474.9 1506.8,516.8 1365.1,537.2 1239.7,556.4 1126.3,575 1021.1,593.5 786.3,639.5 717.5,649.8 644.7,656.1 551.6,659.9 422.1,661.8 203.5,662.6 203.5,730.5Z" fill="#33ff00"/>
<path d="M203.5,730.5 1822.5,730.5 1822.5,504 1518.9,544.5 1263.9,582.1 1049.4,618 798.5,665.5 754,672.6 713.5,677.9 636.6,684.7 539.4,688.9 414,690.8 203.5,691.7 203.5,730.5Z" fill="#66ff00"/>
<path d="M203.5,730.5 1822.5,730.5 1822.5,533.2 1518.9,573.9 1272,610.3 1065.6,644.5 806.6,692.6 721.6,705.3 640.6,713 543.5,717.6 418,719.9 203.5,720.8 203.5,730.5Z" fill="#99ff00"/>
<path d="M748.8,730.5 1822.5,730.5 1822.5,562.3 1514.9,603.7 1268,640.3 1089.9,669.6 830.9,717.2 748.8,730.5Z" fill="#ccff00"/>
<path d="M915.9,730.5 1822.5,730.5 1822.5,591.4 1535.1,630.2 1308.5,663.3 1110.1,695.4 915.9,730.5Z" fill="#ffff00"/>
<path d="M1075.9,730.5 1822.5,730.5 1822.5,620.5 1583.7,652.6 1397.5,679.1 1231.6,704.5 1075.9,730.5Z" fill="#ffcc00"/>
<path d="M1251.7,730.5 1822.5,730.5 1822.5,649.6 1498.7,693.7 1251.7,730.5Z" fill="#ff9900"/>
<path d="M1445.2,730.5 1822.5,730.5 1822.5,678.7 1445.2,730.5Z" fill="#ff6600"/>
<path d="M1653.8,730.5 1822.5,730.5 1822.5,707.9 1653.8,730.5Z" fill="#ff0000"/>
</g>
<defs>
<pattern id="hp" x="2" y="2" width="8" height="8" patternUnits="userSpaceOnUse"><path d="M0,4 L4,0 L8,4 L4,8Z" fill="none" stroke="#0000ff" stroke-width="1"/><rect x="3" y="-1" width="2" height="2" fill="#0000ff"/><rect x="3" y="7" width="2" height="2" fill="#0000ff"/><rect x="-1" y="3" width="2" height="2" fill="#0000ff"/><rect x="7" y="3" width="2" height="2" fill="#0000ff"/></pattern>
<g id="nc" shape-rendering="crispEdges"><circle r="5.5" fill="#000080"/><circle r="4.3" fill="none" stroke="#fff" stroke-width="1.1"/></g>
<g id="nq"><circle r="5.3" fill="#000080" shape-rendering="crispEdges"/><text x="0.3" y="3.9" font-family="Liberation Sans" font-size="10.5" font-weight="bold" fill="#fff" text-anchor="middle">?</text></g>
<g id="nh"><circle cy="1.5" r="4.2" fill="#000080"/><path d="M-3.5,-4 L3.5,-4 M-2,-5.5 L-0.5,-3 M2,-5.5 L0.5,-3" stroke="#000080" stroke-width="1" fill="none"/></g>
</defs>
<rect x="203" y="729" width="1620" height="3" fill="#800080"/>
<rect x="203" y="567" width="486" height="2" fill="#0000ff"/>
<path d="M689.2,568.75 L818.7,504" stroke="#ff00ff" stroke-width="3" fill="none" shape-rendering="crispEdges"/>
<path d="M818.7,504 L1336.8,245.25 L1822.5,245.25 L1822.5,328" stroke="#800080" stroke-width="3" fill="none" stroke-linejoin="miter" shape-rendering="crispEdges"/>
<path d="M818.7,504 L818.7,506 L826,504 L830.9,502.7 L839,500.6 L843,499.6 L851.1,497.6 L858.2,496 L863.2,494.8 L871.3,493 L876.4,491.9 L883.5,490.4 L891.6,488.7 L895.6,487.9 L903.7,486.2 L911.8,484.6 L915.9,483.8 L924,482.2 L932.1,480.6 L936.2,479.8 L944.2,478.3 L952.3,476.7 L957.4,475.7 L964.4,474.4 L972.5,472.9 L979.1,471.7 L984.7,470.7 L992.8,469.2 L1000.9,467.7 L1004.9,467 L1013,465.5 L1021.1,464 L1025.1,463.3 L1033.2,461.9 L1041.3,460.4 L1046.2,459.6 L1053.5,458.3 L1061.6,456.9 L1069.4,455.5 L1073.7,454.8 L1081.8,453.4 L1089.9,452 L1094,451.3 L1102,449.9 L1110.1,448.6 L1116.9,447.4 L1122.3,446.5 L1130.4,445.2 L1138.5,443.8 L1142.5,443.2 L1150.6,441.8 L1158.7,440.5 L1165.9,439.3 L1170.9,438.6 L1178.9,437.3 L1187,436 L1191.1,435.3 L1199.2,434 L1207.3,432.7 L1215.4,431.5 L1219.4,430.8 L1227.5,429.6 L1235.6,428.3 L1242.6,427.2 L1247.8,426.4 L1255.9,425.2 L1263.9,423.9 L1269,423.2 L1276.1,422.1 L1284.2,420.9 L1292.3,419.7 L1296.3,419.1 L1304.4,417.8 L1312.5,416.6 L1320.6,415.4 L1324.7,414.8 L1332.8,413.6 L1340.8,412.5 L1348.9,411.3 L1353,410.7 L1361.1,409.5 L1369.2,408.3 L1377.3,407.2 L1381.3,406.6 L1389.4,405.4 L1397.5,404.3 L1405.6,403.1 L1409.7,402.5 L1417.8,401.4 L1425.8,400.2 L1433.9,399.1 L1438,398.5 L1446.1,397.4 L1454.2,396.3 L1462.3,395.1 L1466.3,394.6 L1474.4,393.4 L1482.5,392.3 L1490.6,391.2 L1494.7,390.6 L1502.7,389.5 L1510.8,388.4 L1518.9,387.3 L1523,386.8 L1531.1,385.7 L1539.2,384.6 L1547.3,383.5 L1552.8,382.7 L1559.4,381.8 L1567.5,380.8 L1575.6,379.7 L1583,378.7 L1587.7,378.1 L1595.8,377 L1603.9,375.9 L1612,374.9 L1616.1,374.3 L1624.2,373.3 L1632.3,372.2 L1640.4,371.2 L1644.6,370.6 L1652.5,369.6 L1660.6,368.5 L1668.7,367.5 L1676.2,366.6 L1680.8,366 L1688.9,364.9 L1697,363.9 L1705.1,362.9 L1709.2,362.4 L1717.3,361.4 L1725.4,360.4 L1733.5,359.4 L1741,358.5 L1745.6,357.9 L1753.7,356.9 L1761.8,355.9 L1769.9,355 L1774.4,354.4 L1782,353.5 L1790.1,352.6 L1798.2,351.6 L1806.3,350.6 L1810.4,350.2 L1811,350.1" stroke="#ff00ff" stroke-width="2" fill="none" shape-rendering="crispEdges"/>
<path d="M689.2,568 L754.4,535.5" stroke="#0000ff" stroke-width="1.2" fill="none"/>
<path d="M203.5,536 L754.4,536 L689.2,568 L203.5,568Z" fill="url(#hp)"/>
<rect x="197" y="549.5" width="492" height="10.5" fill="#fff"/>
<rect x="198.2" y="549.2" width="12" height="10.5" fill="#fff"/>
<text transform="translate(204.2,558) scale(1,0.8)" font-family="Liberation Sans" font-size="10.8" fill="#000080" text-anchor="middle">26</text>
<rect x="220.3" y="549.2" width="12" height="10.5" fill="#fff"/>
<text transform="translate(226.3,558) scale(1,0.8)" font-family="Liberation Sans" font-size="10.8" fill="#000080" text-anchor="middle">26</text>
<rect x="242.4" y="549.2" width="12" height="10.5" fill="#fff"/>
<text transform="translate(248.4,558) scale(1,0.8)" font-family="Liberation Sans" font-size="10.8" fill="#000080" text-anchor="middle">26</text>
<rect x="264.4" y="549.2" width="12" height="10.5" fill="#fff"/>
<text transform="translate(270.4,558) scale(1,0.8)" font-family="Liberation Sans" font-size="10.8" fill="#000080" text-anchor="middle">26</text>
<rect x="286.5" y="549.2" width="12" height="10.5" fill="#fff"/>
<text transform="translate(292.5,558) scale(1,0.8)" font-family="Liberation Sans" font-size="10.8" fill="#000080" text-anchor="middle">26</text>
<rect x="308.6" y="549.2" width="12" height="10.5" fill="#fff"/>
<text transform="translate(314.6,558) scale(1,0.8)" font-family="Liberation Sans" font-size="10.8" fill="#000080" text-anchor="middle">26</text>
<rect x="330.7" y="549.2" width="12" height="10.5" fill="#fff"/>
<text transform="translate(336.7,558) scale(1,0.8)" font-family="Liberation Sans" font-size="10.8" fill="#000080" text-anchor="middle">26</text>
<rect x="352.8" y="549.2" width="12" height="10.5" fill="#fff"/>
<text transform="translate(358.8,558) scale(1,0.8)" font-family="Liberation Sans" font-size="10.8" fill="#000080" text-anchor="middle">26</text>
<rect x="374.8" y="549.2" width="12" height="10.5" fill="#fff"/>
<text transform="translate(380.8,558) scale(1,0.8)" font-family="Liberation Sans" font-size="10.8" fill="#000080" text-anchor="middle">26</text>
<rect x="396.9" y="549.2" width="12" height="10.5" fill="#fff"/>
<text transform="translate(402.9,558) scale(1,0.8)" font-family="Liberation Sans" font-size="10.8" fill="#000080" text-anchor="middle">26</text>
<rect x="419" y="549.2" width="12" height="10.5" fill="#fff"/>
<text transform="translate(425,558) scale(1,0.8)" font-family="Liberation Sans" font-size="10.8" fill="#000080" text-anchor="middle">26</text>
<rect x="441.1" y="549.2" width="12" height="10.5" fill="#fff"/>
<text transform="translate(447.1,558) scale(1,0.8)" font-family="Liberation Sans" font-size="10.8" fill="#000080" text-anchor="middle">26</text>
<rect x="463.2" y="549.2" width="12" height="10.5" fill="#fff"/>
<text transform="translate(469.2,558) scale(1,0.8)" font-family="Liberation Sans" font-size="10.8" fill="#000080" text-anchor="middle">26</text>
<rect x="485.2" y="549.2" width="12" height="10.5" fill="#fff"/>
<text transform="translate(491.2,558) scale(1,0.8)" font-family="Liberation Sans" font-size="10.8" fill="#000080" text-anchor="middle">26</text>
<rect x="507.3" y="549.2" width="12" height="10.5" fill="#fff"/>
<text transform="translate(513.3,558) scale(1,0.8)" font-family="Liberation Sans" font-size="10.8" fill="#000080" text-anchor="middle">26</text>
<rect x="529.4" y="549.2" width="12" height="10.5" fill="#fff"/>
<text transform="translate(535.4,558) scale(1,0.8)" font-family="Liberation Sans" font-size="10.8" fill="#000080" text-anchor="middle">26</text>
<rect x="551.5" y="549.2" width="12" height="10.5" fill="#fff"/>
<text transform="translate(557.5,558) scale(1,0.8)" font-family="Liberation Sans" font-size="10.8" fill="#000080" text-anchor="middle">26</text>
<rect x="573.6" y="549.2" width="12" height="10.5" fill="#fff"/>
<text transform="translate(579.6,558) scale(1,0.8)" font-family="Liberation Sans" font-size="10.8" fill="#000080" text-anchor="middle">26</text>
<rect x="595.6" y="549.2" width="12" height="10.5" fill="#fff"/>
<text transform="translate(601.6,558) scale(1,0.8)" font-family="Liberation Sans" font-size="10.8" fill="#000080" text-anchor="middle">26</text>
<rect x="617.7" y="549.2" width="12" height="10.5" fill="#fff"/>
<text transform="translate(623.7,558) scale(1,0.8)" font-family="Liberation Sans" font-size="10.8" fill="#000080" text-anchor="middle">26</text>
<rect x="639.8" y="549.2" width="12" height="10.5" fill="#fff"/>
<text transform="translate(645.8,558) scale(1,0.8)" font-family="Liberation Sans" font-size="10.8" fill="#000080" text-anchor="middle">26</text>
<rect x="661.9" y="549.2" width="12" height="10.5" fill="#fff"/>
<text transform="translate(667.9,558) scale(1,0.8)" font-family="Liberation Sans" font-size="10.8" fill="#000080" text-anchor="middle">26</text>
<rect x="684" y="549.2" width="12" height="10.5" fill="#fff"/>
<text transform="translate(690,558) scale(1,0.8)" font-family="Liberation Sans" font-size="10.8" fill="#000080" text-anchor="middle">26</text>
<rect x="704.9" y="538.8" width="12" height="10.5" fill="#fff"/>
<text transform="translate(710.9,547.5) scale(1,0.8)" font-family="Liberation Sans" font-size="10.8" fill="#000080" text-anchor="middle">26</text>
<rect x="727.2" y="527.6" width="12" height="10.5" fill="#fff"/>
<text transform="translate(733.2,536.4) scale(1,0.8)" font-family="Liberation Sans" font-size="10.8" fill="#000080" text-anchor="middle">26</text>
<rect x="206.5" y="549.2" width="12.6" height="10.5" fill="#fff"/>
<text transform="translate(213.3,558) scale(1,0.8)" font-family="Liberation Sans" font-size="10.8" fill="#000080" text-anchor="middle">26</text>
<rect x="228.6" y="549.2" width="12.6" height="10.5" fill="#fff"/>
<text transform="translate(235.4,558) scale(1,0.8)" font-family="Liberation Sans" font-size="10.8" fill="#000080" text-anchor="middle">26</text>
<rect x="250.7" y="549.2" width="12.6" height="10.5" fill="#fff"/>
<text transform="translate(257.5,558) scale(1,0.8)" font-family="Liberation Sans" font-size="10.8" fill="#000080" text-anchor="middle">26</text>
<rect x="272.8" y="549.2" width="12.6" height="10.5" fill="#fff"/>
<text transform="translate(279.6,558) scale(1,0.8)" font-family="Liberation Sans" font-size="10.8" fill="#000080" text-anchor="middle">26</text>
<rect x="294.9" y="549.2" width="12.6" height="10.5" fill="#fff"/>
<text transform="translate(301.7,558) scale(1,0.8)" font-family="Liberation Sans" font-size="10.8" fill="#000080" text-anchor="middle">26</text>
<rect x="316.9" y="549.2" width="12.6" height="10.5" fill="#fff"/>
<text transform="translate(323.7,558) scale(1,0.8)" font-family="Liberation Sans" font-size="10.8" fill="#000080" text-anchor="middle">26</text>
<rect x="339" y="549.2" width="12.6" height="10.5" fill="#fff"/>
<text transform="translate(345.8,558) scale(1,0.8)" font-family="Liberation Sans" font-size="10.8" fill="#000080" text-anchor="middle">26</text>
<rect x="361.1" y="549.2" width="12.6" height="10.5" fill="#fff"/>
<text transform="translate(367.9,558) scale(1,0.8)" font-family="Liberation Sans" font-size="10.8" fill="#000080" text-anchor="middle">26</text>
<rect x="383.2" y="549.2" width="12.6" height="10.5" fill="#fff"/>
<text transform="translate(390,558) scale(1,0.8)" font-family="Liberation Sans" font-size="10.8" fill="#000080" text-anchor="middle">26</text>
<rect x="405.3" y="549.2" width="12.6" height="10.5" fill="#fff"/>
<text transform="translate(412.1,558) scale(1,0.8)" font-family="Liberation Sans" font-size="10.8" fill="#000080" text-anchor="middle">26</text>
<rect x="427.3" y="549.2" width="12.6" height="10.5" fill="#fff"/>
<text transform="translate(434.1,558) scale(1,0.8)" font-family="Liberation Sans" font-size="10.8" fill="#000080" text-anchor="middle">26</text>
<rect x="449.4" y="549.2" width="12.6" height="10.5" fill="#fff"/>
<text transform="translate(456.2,558) scale(1,0.8)" font-family="Liberation Sans" font-size="10.8" fill="#000080" text-anchor="middle">26</text>
<rect x="471.5" y="549.2" width="12.6" height="10.5" fill="#fff"/>
<text transform="translate(478.3,558) scale(1,0.8)" font-family="Liberation Sans" font-size="10.8" fill="#000080" text-anchor="middle">26</text>
<rect x="493.6" y="549.2" width="12.6" height="10.5" fill="#fff"/>
<text transform="translate(500.4,558) scale(1,0.8)" font-family="Liberation Sans" font-size="10.8" fill="#000080" text-anchor="middle">26</text>
<rect x="515.7" y="549.2" width="12.6" height="10.5" fill="#fff"/>
<text transform="translate(522.5,558) scale(1,0.8)" font-family="Liberation Sans" font-size="10.8" fill="#000080" text-anchor="middle">26</text>
<rect x="537.7" y="549.2" width="12.6" height="10.5" fill="#fff"/>
<text transform="translate(544.5,558) scale(1,0.8)" font-family="Liberation Sans" font-size="10.8" fill="#000080" text-anchor="middle">26</text>
<rect x="559.8" y="549.2" width="12.6" height="10.5" fill="#fff"/>
<text transform="translate(566.6,558) scale(1,0.8)" font-family="Liberation Sans" font-size="10.8" fill="#000080" text-anchor="middle">26</text>
<rect x="581.9" y="549.2" width="12.6" height="10.5" fill="#fff"/>
<text transform="translate(588.7,558) scale(1,0.8)" font-family="Liberation Sans" font-size="10.8" fill="#000080" text-anchor="middle">26</text>
<rect x="604" y="549.2" width="12.6" height="10.5" fill="#fff"/>
<text transform="translate(610.8,558) scale(1,0.8)" font-family="Liberation Sans" font-size="10.8" fill="#000080" text-anchor="middle">26</text>
<rect x="626.1" y="549.2" width="12.6" height="10.5" fill="#fff"/>
<text transform="translate(632.9,558) scale(1,0.8)" font-family="Liberation Sans" font-size="10.8" fill="#000080" text-anchor="middle">26</text>
<rect x="648.1" y="549.2" width="12.6" height="10.5" fill="#fff"/>
<text transform="translate(654.9,558) scale(1,0.8)" font-family="Liberation Sans" font-size="10.8" fill="#000080" text-anchor="middle">26</text>
<rect x="670.2" y="549.2" width="12.6" height="10.5" fill="#fff"/>
<text transform="translate(677,558) scale(1,0.8)" font-family="Liberation Sans" font-size="10.8" fill="#000080" text-anchor="middle">26</text>
<rect x="691.5" y="544.1" width="12.6" height="10.5" fill="#fff"/>
<text transform="translate(698.3,552.9) scale(1,0.8)" font-family="Liberation Sans" font-size="10.8" fill="#000080" text-anchor="middle">26</text>
<rect x="713.6" y="533" width="12.6" height="10.5" fill="#fff"/>
<text transform="translate(720.4,541.8) scale(1,0.8)" font-family="Liberation Sans" font-size="10.8" fill="#000080" text-anchor="middle">26</text>
<rect x="735.3" y="522.2" width="12.6" height="10.5" fill="#fff"/>
<text transform="translate(742.1,531) scale(1,0.8)" font-family="Liberation Sans" font-size="10.8" fill="#000080" text-anchor="middle">26</text>
<path d="M203.5,560 L689,560 L689,568 L203.5,568Z" fill="url(#hp)"/>
<use href="#nc" x="214.5" y="568.8"/>
<use href="#nc" x="225.6" y="568.8"/>
<use href="#nc" x="236.6" y="568.8"/>
<use href="#nc" x="247.7" y="568.8"/>
<use href="#nc" x="258.7" y="568.8"/>
<use href="#nc" x="269.7" y="568.8"/>
<use href="#nc" x="280.8" y="568.8"/>
<use href="#nc" x="291.8" y="568.8"/>
<use href="#nc" x="302.9" y="568.8"/>
<use href="#nc" x="313.9" y="568.8"/>
<use href="#nc" x="324.9" y="568.8"/>
<use href="#nc" x="336" y="568.8"/>
<use href="#nc" x="347" y="568.8"/>
<use href="#nc" x="358.1" y="568.8"/>
<use href="#nc" x="369.1" y="568.8"/>
<use href="#nc" x="380.1" y="568.8"/>
<use href="#nc" x="391.2" y="568.8"/>
<use href="#nc" x="402.2" y="568.8"/>
<use href="#nc" x="413.3" y="568.8"/>
<use href="#nc" x="424.3" y="568.8"/>
<use href="#nc" x="435.3" y="568.8"/>
<use href="#nc" x="446.4" y="568.8"/>
<use href="#nc" x="457.4" y="568.8"/>
<use href="#nc" x="468.5" y="568.8"/>
<use href="#nc" x="479.5" y="568.8"/>
<use href="#nc" x="490.5" y="568.8"/>
<use href="#nc" x="501.6" y="568.8"/>
<use href="#nc" x="512.6" y="568.8"/>
<use href="#nc" x="523.7" y="568.8"/>
<use href="#nc" x="534.7" y="568.8"/>
<use href="#nc" x="545.7" y="568.8"/>
<use href="#nc" x="556.8" y="568.8"/>
<use href="#nc" x="567.8" y="568.8"/>
<use href="#nc" x="578.9" y="568.8"/>
<use href="#nc" x="589.9" y="568.8"/>
<use href="#nc" x="600.9" y="568.8"/>
<use href="#nc" x="612" y="568.8"/>
<use href="#nc" x="623" y="568.8"/>
<use href="#nc" x="634.1" y="568.8"/>
<use href="#nc" x="645.1" y="568.8"/>
<use href="#nc" x="656.1" y="568.8"/>
<use href="#nc" x="667.2" y="568.8"/>
<use href="#nc" x="678.2" y="568.8"/>
<use href="#nc" x="689.3" y="568.8"/>
<use href="#nc" x="699.5" y="563.6"/>
<use href="#nc" x="710.2" y="558.2"/>
<use href="#nc" x="721.6" y="552.5"/>
<use href="#nc" x="732.5" y="547.1"/>
<use href="#nc" x="743.3" y="541.7"/>
<rect x="203" y="567.5" width="486" height="1.2" fill="#0000ff"/>
<path d="M689.2,568 L754.4,535.5" stroke="#0000ff" stroke-width="1" fill="none"/>
<rect x="197" y="569" width="13" height="154" fill="#fff"/>
<text transform="translate(203.5,569.8) scale(1,0.8)" font-family="Liberation Sans" font-size="10.8" fill="#000080" text-anchor="middle">26</text>
<text transform="translate(203.5,592.9) scale(1,0.8)" font-family="Liberation Sans" font-size="10.8" fill="#000080" text-anchor="middle">26</text>
<text transform="translate(203.5,616) scale(1,0.8)" font-family="Liberation Sans" font-size="10.8" fill="#000080" text-anchor="middle">26</text>
<text transform="translate(203.5,639) scale(1,0.8)" font-family="Liberation Sans" font-size="10.8" fill="#000080" text-anchor="middle">26</text>
<text transform="translate(203.5,662.1) scale(1,0.8)" font-family="Liberation Sans" font-size="10.8" fill="#000080" text-anchor="middle">26</text>
<text transform="translate(203.5,685.2) scale(1,0.8)" font-family="Liberation Sans" font-size="10.8" fill="#000080" text-anchor="middle">26</text>
<text transform="translate(203.5,708.4) scale(1,0.8)" font-family="Liberation Sans" font-size="10.8" fill="#000080" text-anchor="middle">26</text>
<use href="#nc" x="203.5" y="580.3"/>
<use href="#nc" x="203.5" y="603.4"/>
<use href="#nc" x="203.5" y="626.5"/>
<use href="#nc" x="203.5" y="649.6"/>
<use href="#nc" x="203.5" y="672.7"/>
<use href="#nc" x="203.5" y="695.8"/>
<use href="#nc" x="203.5" y="718.9"/>
<use href="#nc" x="203.5" y="730.5"/>
<rect x="1811" y="328" width="23" height="395" fill="#fff"/>
<text transform="translate(1812,338) scale(1,0.85)" font-family="Liberation Sans" font-size="10" fill="#000080" text-anchor="start">31.8</text>
<rect x="1811" y="338.3" width="23" height="11.2" fill="#fff"/>
<text transform="translate(1812,349.2) scale(1,0.85)" font-family="Liberation Sans" font-size="10" fill="#000080" text-anchor="start">31.8</text>
<rect x="1811" y="349.6" width="23" height="11.2" fill="#fff"/>
<text transform="translate(1812,360.5) scale(1,0.85)" font-family="Liberation Sans" font-size="10" fill="#000080" text-anchor="start">31.8</text>
<use href="#nc" x="1822.5" y="357.5"/>
<rect x="1811" y="360.8" width="23" height="11.2" fill="#fff"/>
<text transform="translate(1812,371.7) scale(1,0.85)" font-family="Liberation Sans" font-size="10" fill="#000080" text-anchor="start">31.8</text>
<rect x="1811" y="372.1" width="23" height="11.2" fill="#fff"/>
<text transform="translate(1812,383) scale(1,0.85)" font-family="Liberation Sans" font-size="10" fill="#000080" text-anchor="start">31.8</text>
<use href="#nc" x="1822.5" y="380"/>
<rect x="1811" y="383.3" width="23" height="11.2" fill="#fff"/>
<text transform="translate(1812,394.2) scale(1,0.85)" font-family="Liberation Sans" font-size="10" fill="#000080" text-anchor="start">31.8</text>
<rect x="1811" y="394.5" width="23" height="11.2" fill="#fff"/>
<text transform="translate(1812,405.4) scale(1,0.85)" font-family="Liberation Sans" font-size="10" fill="#000080" text-anchor="start">31.8</text>
<use href="#nc" x="1822.5" y="402.4"/>
<rect x="1811" y="405.8" width="23" height="11.2" fill="#fff"/>
<text transform="translate(1812,416.7) scale(1,0.85)" font-family="Liberation Sans" font-size="10" fill="#000080" text-anchor="start">31.8</text>
<rect x="1811" y="417" width="23" height="11.2" fill="#fff"/>
<text transform="translate(1812,427.9) scale(1,0.85)" font-family="Liberation Sans" font-size="10" fill="#000080" text-anchor="start">31.8</text>
<use href="#nc" x="1822.5" y="424.9"/>
<rect x="1811" y="428.3" width="23" height="11.2" fill="#fff"/>
<text transform="translate(1812,439.2) scale(1,0.85)" font-family="Liberation Sans" font-size="10" fill="#000080" text-anchor="start">31.8</text>
<rect x="1811" y="439.5" width="23" height="11.2" fill="#fff"/>
<text transform="translate(1812,450.4) scale(1,0.85)" font-family="Liberation Sans" font-size="10" fill="#000080" text-anchor="start">31.8</text>
<use href="#nc" x="1822.5" y="447.4"/>
<rect x="1811" y="450.7" width="23" height="11.2" fill="#fff"/>
<text transform="translate(1812,461.6) scale(1,0.85)" font-family="Liberation Sans" font-size="10" fill="#000080" text-anchor="start">31.8</text>
<rect x="1811" y="462" width="23" height="11.2" fill="#fff"/>
<text transform="translate(1812,472.9) scale(1,0.85)" font-family="Liberation Sans" font-size="10" fill="#000080" text-anchor="start">31.8</text>
<use href="#nc" x="1822.5" y="469.9"/>
<rect x="1811" y="473.2" width="23" height="11.2" fill="#fff"/>
<text transform="translate(1812,484.1) scale(1,0.85)" font-family="Liberation Sans" font-size="10" fill="#000080" text-anchor="start">31.8</text>
<rect x="1811" y="484.5" width="23" height="11.2" fill="#fff"/>
<text transform="translate(1812,495.4) scale(1,0.85)" font-family="Liberation Sans" font-size="10" fill="#000080" text-anchor="start">31.8</text>
<use href="#nc" x="1822.5" y="492.4"/>
<rect x="1811" y="495.7" width="23" height="11.2" fill="#fff"/>
<text transform="translate(1812,506.6) scale(1,0.85)" font-family="Liberation Sans" font-size="10" fill="#000080" text-anchor="start">31.8</text>
<rect x="1811" y="506.9" width="23" height="11.2" fill="#fff"/>
<text transform="translate(1812,517.8) scale(1,0.85)" font-family="Liberation Sans" font-size="10" fill="#000080" text-anchor="start">31.8</text>
<use href="#nc" x="1822.5" y="514.8"/>
<rect x="1811" y="518.2" width="23" height="11.2" fill="#fff"/>
<text transform="translate(1812,529.1) scale(1,0.85)" font-family="Liberation Sans" font-size="10" fill="#000080" text-anchor="start">31.8</text>
<rect x="1811" y="529.4" width="23" height="11.2" fill="#fff"/>
<text transform="translate(1812,540.3) scale(1,0.85)" font-family="Liberation Sans" font-size="10" fill="#000080" text-anchor="start">31.8</text>
<use href="#nc" x="1822.5" y="537.3"/>
<rect x="1811" y="540.7" width="23" height="11.2" fill="#fff"/>
<text transform="translate(1812,551.6) scale(1,0.85)" font-family="Liberation Sans" font-size="10" fill="#000080" text-anchor="start">31.8</text>
<rect x="1811" y="551.9" width="23" height="11.2" fill="#fff"/>
<text transform="translate(1812,562.8) scale(1,0.85)" font-family="Liberation Sans" font-size="10" fill="#000080" text-anchor="start">31.8</text>
<use href="#nc" x="1822.5" y="559.8"/>
<rect x="1811" y="563.1" width="23" height="11.2" fill="#fff"/>
<text transform="translate(1812,574) scale(1,0.85)" font-family="Liberation Sans" font-size="10" fill="#000080" text-anchor="start">31.8</text>
<rect x="1811" y="574.4" width="23" height="11.2" fill="#fff"/>
<text transform="translate(1812,585.3) scale(1,0.85)" font-family="Liberation Sans" font-size="10" fill="#000080" text-anchor="start">31.8</text>
<use href="#nc" x="1822.5" y="582.3"/>
<rect x="1811" y="585.6" width="23" height="11.2" fill="#fff"/>
<text transform="translate(1812,596.5) scale(1,0.85)" font-family="Liberation Sans" font-size="10" fill="#000080" text-anchor="start">31.8</text>
<rect x="1811" y="596.9" width="23" height="11.2" fill="#fff"/>
<text transform="translate(1812,607.8) scale(1,0.85)" font-family="Liberation Sans" font-size="10" fill="#000080" text-anchor="start">31.8</text>
<use href="#nc" x="1822.5" y="604.8"/>
<rect x="1811" y="608.1" width="23" height="11.2" fill="#fff"/>
<text transform="translate(1812,619) scale(1,0.85)" font-family="Liberation Sans" font-size="10" fill="#000080" text-anchor="start">31.8</text>
<rect x="1811" y="619.3" width="23" height="11.2" fill="#fff"/>
<text transform="translate(1812,630.2) scale(1,0.85)" font-family="Liberation Sans" font-size="10" fill="#000080" text-anchor="start">31.8</text>
<use href="#nc" x="1822.5" y="627.2"/>
<rect x="1811" y="630.6" width="23" height="11.2" fill="#fff"/>
<text transform="translate(1812,641.5) scale(1,0.85)" font-family="Liberation Sans" font-size="10" fill="#000080" text-anchor="start">31.8</text>
<rect x="1811" y="641.8" width="23" height="11.2" fill="#fff"/>
<text transform="translate(1812,652.7) scale(1,0.85)" font-family="Liberation Sans" font-size="10" fill="#000080" text-anchor="start">31.8</text>
<use href="#nc" x="1822.5" y="649.7"/>
<rect x="1811" y="653.1" width="23" height="11.2" fill="#fff"/>
<text transform="translate(1812,664) scale(1,0.85)" font-family="Liberation Sans" font-size="10" fill="#000080" text-anchor="start">31.8</text>
<rect x="1811" y="664.3" width="23" height="11.2" fill="#fff"/>
<text transform="translate(1812,675.2) scale(1,0.85)" font-family="Liberation Sans" font-size="10" fill="#000080" text-anchor="start">31.8</text>
<use href="#nc" x="1822.5" y="672.2"/>
<rect x="1811" y="675.5" width="23" height="11.2" fill="#fff"/>
<text transform="translate(1812,686.4) scale(1,0.85)" font-family="Liberation Sans" font-size="10" fill="#000080" text-anchor="start">31.8</text>
<rect x="1811" y="686.8" width="23" height="11.2" fill="#fff"/>
<text transform="translate(1812,697.7) scale(1,0.85)" font-family="Liberation Sans" font-size="10" fill="#000080" text-anchor="start">31.8</text>
<use href="#nc" x="1822.5" y="694.7"/>
<rect x="1811" y="698" width="23" height="11.2" fill="#fff"/>
<text transform="translate(1812,708.9) scale(1,0.85)" font-family="Liberation Sans" font-size="10" fill="#000080" text-anchor="start">31.8</text>
<rect x="1811" y="709.3" width="23" height="11.2" fill="#fff"/>
<text transform="translate(1812,720.2) scale(1,0.85)" font-family="Liberation Sans" font-size="10" fill="#000080" text-anchor="start">31.8</text>
<use href="#nc" x="1822.5" y="717.2"/>
<use href="#nc" x="1822.5" y="730.5"/>
<use href="#nq" x="763.4" y="531.7"/>
<use href="#nq" x="782.8" y="521.9"/>
<use href="#nq" x="802.2" y="512.2"/>
<use href="#nq" x="821.6" y="502.5"/>
<use href="#nq" x="841" y="492.8"/>
<use href="#nq" x="860.4" y="483.1"/>
<use href="#nq" x="879.9" y="473.4"/>
<use href="#nq" x="899.3" y="463.7"/>
<use href="#nq" x="918.7" y="454"/>
<use href="#nq" x="938.1" y="444.3"/>
<use href="#nq" x="957.5" y="434.6"/>
<use href="#nq" x="976.9" y="424.9"/>
<use href="#nq" x="996.3" y="415.2"/>
<use href="#nq" x="1015.7" y="405.5"/>
<use href="#nq" x="1035.1" y="395.8"/>
<use href="#nq" x="1054.5" y="386.1"/>
<use href="#nq" x="1074" y="376.4"/>
<use href="#nq" x="1093.4" y="366.7"/>
<use href="#nq" x="1112.8" y="357"/>
<use href="#nq" x="1132.2" y="347.3"/>
<use href="#nq" x="1151.6" y="337.6"/>
<use href="#nq" x="1171" y="327.8"/>
<use href="#nq" x="1190.4" y="318.1"/>
<use href="#nq" x="1209.8" y="308.4"/>
<use href="#nq" x="1229.2" y="298.7"/>
<use href="#nq" x="1248.7" y="289"/>
<use href="#nq" x="1268.1" y="279.3"/>
<use href="#nq" x="1287.5" y="269.6"/>
<use href="#nq" x="1306.9" y="259.9"/>
<use href="#nq" x="1326.3" y="250.2"/>
<use href="#nq" x="1347.5" y="245.25"/>
<use href="#nq" x="1369.6" y="245.25"/>
<use href="#nq" x="1391.7" y="245.25"/>
<use href="#nq" x="1413.8" y="245.25"/>
<use href="#nq" x="1435.9" y="245.25"/>
<use href="#nq" x="1458" y="245.25"/>
<use href="#nq" x="1480" y="245.25"/>
<use href="#nq" x="1502.1" y="245.25"/>
<use href="#nq" x="1524.2" y="245.25"/>
<use href="#nq" x="1546.3" y="245.25"/>
<use href="#nq" x="1568.4" y="245.25"/>
<use href="#nq" x="1590.5" y="245.25"/>
<use href="#nq" x="1612.6" y="245.25"/>
<use href="#nq" x="1634.7" y="245.25"/>
<use href="#nq" x="1656.8" y="245.25"/>
<use href="#nq" x="1678.8" y="245.25"/>
<use href="#nq" x="1700.9" y="245.25"/>
<use href="#nq" x="1723" y="245.25"/>
<use href="#nq" x="1745.1" y="245.25"/>
<use href="#nq" x="1767.2" y="245.25"/>
<use href="#nq" x="1789.3" y="245.25"/>
<use href="#nq" x="1811.4" y="245.25"/>
<text x="166.5" y="508" font-family="Liberation Sans" font-size="10.5" fill="#0000ff">0.00981 MN/m2</text>
<rect x="203" y="514" width="486" height="1" fill="#0000ff"/>
<rect x="203" y="514" width="1" height="46" fill="#0000ff"/>
<path d="M200,557.5 L207,557.5 L203.5,568.5Z" fill="#0000ff"/>
<rect x="446" y="514" width="1" height="46" fill="#0000ff"/>
<path d="M443,557.5 L450,557.5 L446.5,568.5Z" fill="#0000ff"/>
<rect x="689" y="514" width="1" height="46" fill="#0000ff"/>
<path d="M686,557.5 L693,557.5 L689.5,568.5Z" fill="#0000ff"/>
<rect x="584" y="503" width="76" height="12" fill="#fff"/>
<text x="586" y="513" font-family="Liberation Sans" font-size="10.5" fill="#0000ff">0.00981 MN/m2</text>
<path d="M664.9,520.6 L754.4,536.2 M664.9,520.6 L684,559 M709.2,528.5 L718,546" stroke="#0000ff" stroke-width="1" fill="none"/>
<path d="M680,559 L687,555.5 L688,566Z M714.5,547 L721,543.5 L721.5,553Z" fill="#0000ff"/>
<rect x="1335" y="245" width="2" height="486" fill="#008000"/>
<circle cx="1336" cy="245.5" r="4" fill="#fff" stroke="#008000" stroke-width="1"/>
<circle cx="1336" cy="730.5" r="4" fill="#fff" stroke="#008000" stroke-width="1"/>
<rect x="1227" y="480" width="92" height="14" fill="#fff"/>
<text x="1231" y="491" font-family="Liberation Sans" font-size="10.8" fill="#006400">8.00424e-08 m3/s</text>
<path d="M1323.4,487.5 L1336,476 L1336,481.5 L1348.3,483 L1348.3,492 L1336,493 L1336,498.5Z" fill="#fff" stroke="#008000" stroke-width="1"/>
<rect x="1848" y="50" width="27" height="27" fill="none" stroke="#000080" stroke-width="1.5"/>
<path d="M1861.5,22 L1861.5,43 M1882,63.4 L1903,63.4" stroke="#000080" stroke-width="1.6" fill="none"/>
<path d="M1854,42 L1869,42 L1861.5,49.5Z M1882.6,55.9 L1882.6,71 L1875.4,63.4Z" fill="#000080"/>
</svg>
</body></html>
